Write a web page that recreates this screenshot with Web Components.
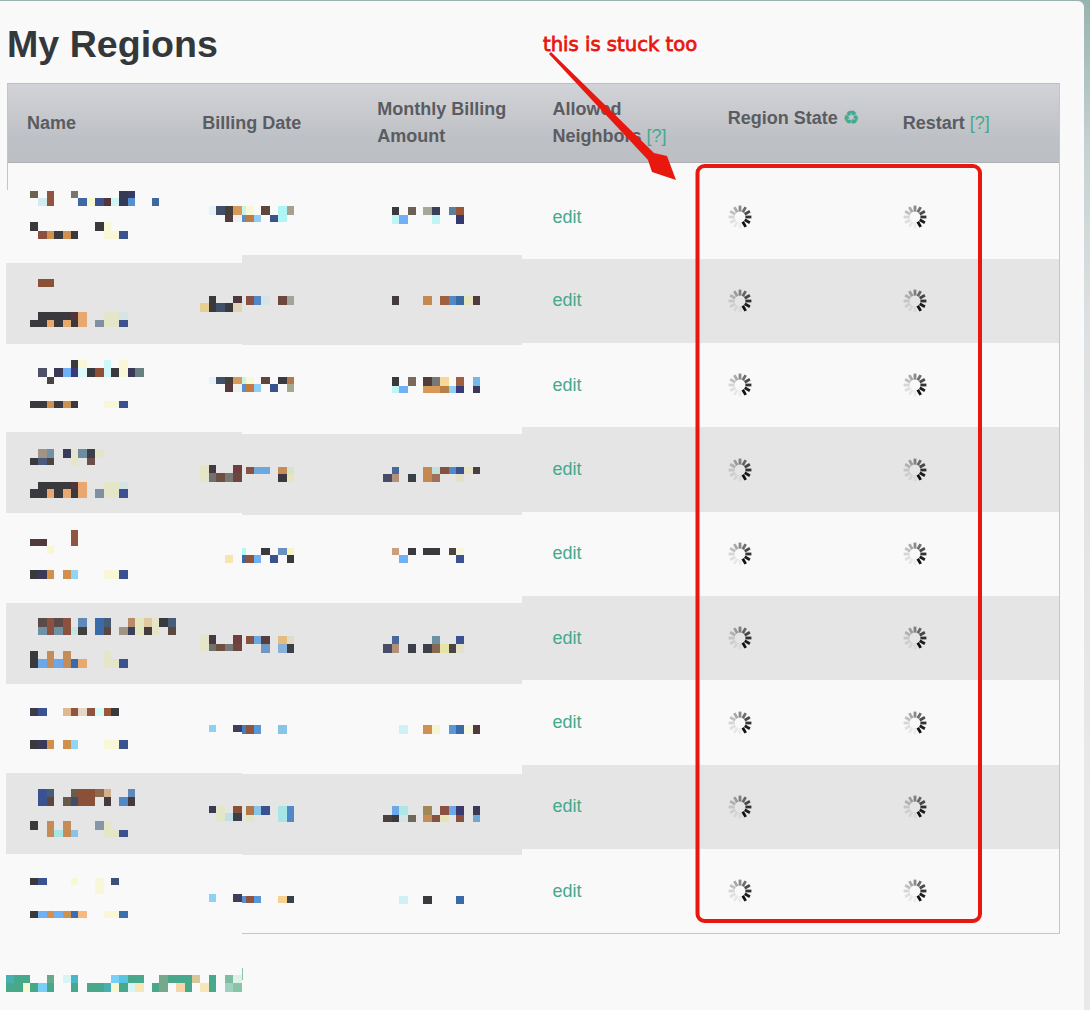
<!DOCTYPE html>
<html><head><meta charset="utf-8">
<style>
html,body{margin:0;padding:0;height:100%}
body{font-family:"Liberation Sans",Arial,sans-serif;background:linear-gradient(#98b3af,#c6d2d1 150px,#dde0e2 320px,#e9e9e9 800px);overflow:hidden}
</style></head>
<body>
<app-page>
  <page-title>My Regions</page-title>
  <regions-table>
    <table-head>
      <head-cell>Name</head-cell>
      <head-cell>Billing Date</head-cell>
      <head-cell>Monthly Billing Amount</head-cell>
      <head-cell>Allowed Neighbors <help-link></help-link></head-cell>
      <head-cell raised>Region State <recycle-mark></recycle-mark></head-cell>
      <head-cell>Restart <help-link></help-link></head-cell>
    </table-head>
    <region-row first></region-row>
    <region-row alt></region-row>
    <region-row></region-row>
    <region-row alt></region-row>
    <region-row></region-row>
    <region-row alt></region-row>
    <region-row></region-row>
    <region-row alt></region-row>
    <region-row></region-row>
  </regions-table>
  <redaction-layer></redaction-layer>
  <annotation-layer></annotation-layer>
</app-page>
<script>
function shadow(el,html){el.attachShadow({mode:'open'}).innerHTML=html;}
customElements.define('app-page',class extends HTMLElement{constructor(){super();shadow(this,`<style>
:host{display:block;position:relative;box-sizing:border-box;width:1084px;height:1009px;margin-top:1px;background:#f9f9f9;border-top-right-radius:6px;padding:22px 0 0 7px;color:#333}
</style><slot></slot>`);}});
customElements.define('page-title',class extends HTMLElement{constructor(){super();shadow(this,`<style>
:host{display:block;font:bold 37.6px/42px "Liberation Sans",Arial,sans-serif;color:#35383b;margin-bottom:18px}
</style><slot></slot>`);}});
customElements.define('regions-table',class extends HTMLElement{constructor(){super();shadow(this,`<style>
:host{display:block;box-sizing:border-box;width:1053px;border:1px solid #c6c6c6;border-top-color:#bcbec2}
</style><slot></slot>`);}});
customElements.define('table-head',class extends HTMLElement{constructor(){super();shadow(this,`<style>
:host{display:grid;box-sizing:border-box;grid-template-columns:repeat(6,1fr);height:79px;align-items:center;background:linear-gradient(#d2d3d8,#c9cace 35%,#bdc0c5 70%,#bcbfc4);border-bottom:1px solid #aeb0b5}
</style><slot></slot>`);}});
customElements.define('head-cell',class extends HTMLElement{constructor(){super();shadow(this,`<style>
:host{display:block;padding:0 19px;font:bold 18px/27px "Liberation Sans",Arial,sans-serif;color:#5a5c62}
:host([raised]){padding-bottom:10px}
</style><slot></slot>`);}});
customElements.define('help-link',class extends HTMLElement{constructor(){super();shadow(this,`<style>
:host{display:inline;font-weight:normal;color:#45a98d}
</style>[?]`);}});
customElements.define('recycle-mark',class extends HTMLElement{constructor(){super();shadow(this,`<style>
:host{display:inline;font:normal 18px/20px "DejaVu Sans",sans-serif;color:#45a98d;-webkit-text-stroke:.5px #45a98d}
</style>♻`);}});
customElements.define('load-spinner',class extends HTMLElement{constructor(){super();
 const o=[1,.95,.85,.75,.6,.48,.34,.24,.15,.1,.07,.05];
 let t='';
 // darkest spoke at five o'clock, fading counter-clockwise
 o.forEach((op,i)=>{t+=`<line x1="12" y1="6.6" x2="12" y2="0.6" transform="rotate(${150-i*30} 12 12)" stroke="#111" stroke-width="2.8" opacity="${op}"/>`;});
 shadow(this,`<style>:host{display:inline-block;width:24px;height:24px;line-height:0}svg{display:block;filter:blur(.25px)}</style><svg width="24" height="24" viewBox="0 0 24 24">${t}</svg>`);}});
customElements.define('region-row',class extends HTMLElement{constructor(){super();shadow(this,`<style>
:host{display:grid;box-sizing:border-box;grid-template-columns:repeat(6,1fr);height:84.33px;align-items:center;background:#f9f9f9;font:18px/27px "Liberation Sans",Arial,sans-serif}
:host([alt]){background:#e5e5e5}
:host([first]){height:95.84px;padding-top:13px}
.c{padding-left:19px;display:block}
a{color:#45a98d;text-decoration:none}
load-spinner{display:block}
</style>
<div class="c"></div><div class="c"></div><div class="c"></div>
<div class="c"><a>edit</a></div>
<div class="c"><load-spinner></load-spinner></div>
<div class="c"><load-spinner></load-spinner></div>`);}});
const D='#3a3a3e',B='#3a5290',O='#d09050',Y='#f8f8d8',E='#e5e5c8',R='#8f5540',L='#70b0f5',T='#48a88c';
const M=[
// row 1
[30,38,191,198,'#6b6252'],[47,54,191,206,R],[71,78,191,198,'#77766b'],[119,128,191,198,'#363a52'],[128,135,191,198,'#383b60'],
[38,47,198,206,'#d0ecf1'],[78,87,198,206,'#4068a4'],[87,95,198,206,'#f7f7d0'],[95,104,198,206,B],[104,111,198,206,'#553638'],[111,119,198,206,'#d0f5f5'],[119,128,198,206,'#363a5a'],[128,135,198,206,'#5590d0'],[152,159,198,206,'#4068a0'],
[30,38,222,231,D],[38,47,231,239,'#8c5040'],[47,54,231,239,O],[54,63,231,239,D],[63,71,231,239,O],[71,78,231,239,D],[95,104,222,231,D],[104,111,222,239,Y],[111,119,231,239,Y],[119,128,231,239,B],
[209,216,206,215,'#e5f3f8'],[216,225,206,215,'#405068'],[225,233,206,215,'#454038'],[233,242,206,215,'#d89858'],[242,246,206,215,'#c8f5e8'],[246,254,206,215,Y],[261,270,206,215,'#5e463c'],[278,287,206,222,'#b0f5f5'],[287,294,206,215,'#a89f90'],
[225,233,215,222,'#553b3b'],[233,242,215,222,'#f0f0f0'],[242,246,215,222,'#5590d0'],[246,254,215,222,'#c07c40'],[254,261,215,222,'#8ccff8'],[270,278,215,222,B],
[392,399,207,215,D],[408,416,207,215,'#6e6054'],[423,432,207,215,'#a8a898'],[432,440,207,215,'#3a4058'],[449,456,207,215,'#5c7f9c'],[456,464,207,215,'#985838'],
[392,399,215,224,'#c0f5f8'],[399,408,215,224,L],[432,440,215,224,'#c0f5f5'],[456,464,215,224,'#383870'],
// row 2
[38,54,279,287,'#8a5038'],[38,71,312,320,D],[71,78,312,320,'#553638'],[78,87,312,327,'#e8a870'],[104,119,312,327,E],[119,128,312,320,'#d5e5e5'],
[30,47,320,327,D],[47,54,320,327,'#e8a870'],[54,63,320,327,D],[63,71,320,327,'#e8a870'],[71,78,320,327,D],[95,104,320,327,'#8090a0'],[119,128,320,327,B],
[209,216,296,312,D],[233,242,296,303,'#4e383c'],[246,254,296,305,'#8a5040'],[254,261,296,305,'#5088c8'],[261,270,296,305,'#d5e5e5'],[278,287,296,305,'#6e4640'],[287,294,296,305,'#a5a298'],
[200,209,303,312,'#e5d090'],[216,225,303,312,'#405068'],[225,233,303,312,D],[233,242,303,312,'#e0d5b8'],
[392,399,296,305,'#443a40'],[423,432,296,305,'#c48850'],[440,449,296,305,'#a06040'],[449,456,296,305,'#5088c8'],[456,464,296,305,'#3a6aa0'],[464,473,296,305,'#e5e5c0'],[473,480,296,305,'#503a40'],
// row 3
[71,78,360,368,D],[78,87,360,368,Y],[104,111,360,377,'#d0f8f8'],[119,128,360,377,Y],
[38,47,368,377,'#505068'],[54,63,368,377,'#3a3a58'],[63,71,368,377,L],[71,78,368,377,'#3a3a78'],[78,87,368,377,'#e0fafa'],[87,95,368,377,D],[95,104,368,377,'#905038'],[111,119,368,377,D],[128,135,368,377,'#3a3a58'],[135,144,368,377,'#688080'],[47,54,377,384,'#4a4540'],
[30,47,401,408,D],[47,54,401,408,O],[54,63,401,408,D],[63,71,401,408,O],[71,78,401,408,D],[104,119,401,408,Y],[119,128,401,408,B],
[209,216,377,384,'#e5f3f8'],[216,225,377,384,'#405068'],[225,233,377,384,'#454038'],[233,242,377,384,'#d89858'],[242,246,377,384,'#c8f5e8'],[246,254,377,384,Y],[261,270,377,384,'#5e463c'],[278,287,377,384,D],[287,294,377,384,'#b07850'],
[225,233,384,392,'#553b3b'],[233,242,384,392,'#f0f0f0'],[242,246,384,392,'#5590d0'],[246,254,384,392,'#c07c40'],[254,261,384,392,'#8ccff8'],[270,278,384,392,B],[287,294,384,392,'#a8a890'],
[392,399,377,386,D],[408,416,377,386,'#7a6a5e'],[423,432,377,386,'#503e3e'],[432,440,377,386,'#787878'],[440,449,377,386,'#f8d898'],[456,464,377,386,'#a06040'],[473,480,377,386,'#78b8e8'],
[392,399,386,393,'#c0f5f8'],[399,408,386,393,L],[423,440,386,393,'#d89858'],[440,449,386,393,'#b88048'],[449,456,386,393,'#8cd0f5'],[456,464,386,393,'#3a3a78'],[473,480,386,393,'#3a3a58'],
// row 4
[38,47,449,458,'#a29484'],[47,54,449,458,'#7490a4'],[63,71,449,458,'#3a3a5c'],[71,78,449,465,E],[78,87,449,458,'#6c8ca0'],[87,95,449,458,'#3a3f48'],[95,104,449,458,E],
[30,38,458,465,D],[38,47,458,465,'#4a5a7c'],[47,54,458,465,'#4a4540'],[87,95,458,465,'#6a5048'],
[38,71,482,489,D],[71,78,482,489,'#553638'],[78,87,482,498,'#e8a870'],[104,119,482,498,E],[119,128,482,489,'#d5e5e5'],
[30,47,489,498,D],[47,54,489,498,'#e8a870'],[54,63,489,498,D],[63,71,489,498,'#e8a870'],[71,78,489,498,D],[95,104,489,498,'#8090a0'],[119,128,489,498,B],
[200,209,465,482,E],[209,216,465,473,'#443a40'],[233,242,465,473,'#703e40'],[246,254,467,474,'#8a5040'],[254,270,467,474,'#6ca8e0'],[278,287,467,474,'#c88c58'],[287,294,467,474,'#d5e5c8'],
[209,216,473,482,'#707070'],[216,225,473,482,'#6e5040'],[225,233,473,482,'#787878'],[233,242,473,482,'#6e4640'],[278,287,474,482,D],[287,294,474,482,'#e5e5c0'],
[392,399,467,474,'#48689c'],[423,432,467,482,'#c48850'],[432,440,467,474,'#c0e0e0'],[440,449,467,474,'#885040'],[449,456,467,474,'#5088c8'],[456,464,467,474,B],[464,473,467,474,'#e5e5c0'],[473,480,467,474,'#4a3e42'],
[383,392,474,482,'#484c64'],[392,399,474,482,'#b09078'],[408,416,474,482,'#3a3f48'],[432,440,474,482,'#a07058'],[456,464,474,482,'#e5e0c8'],
// row 5
[71,78,530,546,R],[30,47,539,546,'#503a3c'],[47,54,546,554,'#f8f8d0'],
[30,38,570,579,D],[38,47,570,579,'#3a3a58'],[47,54,570,579,O],[63,71,570,579,O],[71,78,570,579,'#90d5f8'],[104,119,570,579,Y],[119,128,570,579,B],
[225,233,555,563,'#f5e5b0'],[242,246,548,555,'#b0f8f8'],[242,246,555,563,'#3a6aa0'],[246,254,555,563,R],[254,261,555,563,L],[261,270,548,555,D],[270,278,555,563,B],[278,287,548,555,'#6890c0'],[287,294,548,555,'#f8f5c0'],[287,294,555,563,D],
[392,399,548,555,'#c8a080'],[408,416,548,555,D],[423,440,548,555,D],[449,456,548,555,'#4a4540'],[456,464,548,555,'#f8f5e0'],[399,408,555,563,L],[456,464,555,563,B],
// row 6
[38,47,618,627,'#5a4a48'],[47,54,618,635,'#8a5040'],[54,63,618,627,'#5a4a48'],[63,71,618,635,'#8a5040'],[78,87,618,627,'#6088b8'],[95,104,618,635,'#3a6aa8'],[104,111,618,627,'#485c78'],[128,135,618,627,'#b88c68'],[135,144,618,635,'#e5e5c0'],[144,152,618,627,'#e0c8a0'],[152,159,618,635,E],[159,168,618,627,D],[168,176,618,627,'#485c78'],
[38,47,627,635,'#7090a4'],[54,63,627,635,'#7090a4'],[71,78,627,635,'#c8e5e5'],[78,87,627,635,'#3f403e'],[104,111,627,635,'#5a4840'],[119,128,627,635,'#a29484'],[128,135,627,635,'#3a4058'],[144,152,627,635,'#443c3c'],[168,176,627,635,'#5a4840'],
[30,38,651,668,D],[47,54,651,668,'#c48c58'],[63,71,651,668,'#c48c58'],[104,111,651,668,E],[38,47,659,668,'#6ca8e8'],[54,63,659,668,'#6ca8e8'],[71,78,659,668,'#3a6aa8'],[78,87,659,668,'#e8a870'],[111,119,659,668,E],[119,128,659,668,B],
[200,209,635,651,E],[209,216,635,644,'#443a40'],[233,242,635,644,'#703e40'],[246,254,636,644,'#8a5040'],[254,261,636,644,'#6ca8e0'],[261,270,636,644,'#553e3e'],[278,287,636,644,'#e5bc80'],[287,294,636,644,'#e0dcc8'],
[209,216,644,651,'#707070'],[216,225,644,651,'#6e5040'],[225,233,644,651,'#787878'],[233,242,644,651,'#6e4640'],[261,270,644,653,'#7098c0'],[278,287,644,653,'#88b0d8'],[287,294,644,653,'#3a3f48'],
[392,399,636,644,'#48689c'],[432,440,636,644,'#6c90a4'],[456,464,636,644,B],
[383,392,644,653,'#484c64'],[392,399,644,653,'#b09078'],[408,416,644,653,'#3a3f48'],[423,432,644,653,'#3a3f48'],[432,440,644,653,'#886850'],[440,449,644,653,'#e5e5a8'],[449,456,644,653,'#4a4540'],[456,464,644,653,'#e5e0c8'],
// row 7
[30,38,708,716,'#3e3c4c'],[38,47,708,716,B],[63,71,708,716,'#e0b890'],[71,78,708,716,R],[78,87,708,716,'#e5d8c8'],[87,95,708,716,R],[95,104,708,716,'#d5f8f8'],[104,111,708,716,'#985838'],[111,119,708,716,D],
[30,38,740,749,D],[38,47,740,749,'#3a3a58'],[47,54,740,749,O],[63,71,740,749,O],[71,78,740,749,'#90d5f8'],[104,119,740,749,Y],[119,128,740,749,B],
[209,216,725,732,'#90d0f5'],[233,242,725,732,'#403e58'],[242,246,725,734,'#4080c0'],[246,254,725,734,R],[254,261,725,734,'#5898d8'],[278,287,725,734,'#88c4e8'],
[399,408,725,734,'#d0f0f5'],[423,432,725,734,O],[432,440,725,734,'#f5f5d0'],[449,456,725,734,'#5898d8'],[456,464,725,734,'#3a6aa8'],[464,473,725,734,'#f8f8e0'],[473,480,725,734,'#503a40'],
// row 8
[38,47,789,806,B],[47,54,789,797,'#485c78'],[71,78,789,797,'#6e5a48'],[78,95,789,806,'#8a5038'],[95,104,789,797,'#906850'],[104,111,789,797,'#d0b090'],[128,135,789,797,'#6088b8'],
[47,54,797,806,'#5a4840'],[63,71,797,806,'#685a48'],[71,78,797,806,'#3f4e6c'],[104,111,797,806,'#443a3c'],[119,128,797,806,'#5088c8'],[128,135,797,806,'#443a3c'],
[30,38,821,830,D],[47,54,821,837,'#c48c58'],[63,71,821,837,'#c48c58'],[95,104,821,830,'#8496a8'],[104,111,821,837,E],[54,63,830,837,'#a8e5e5'],[71,78,830,837,'#88c4e8'],[111,119,830,837,E],[119,128,830,837,B],
[209,216,806,813,'#3a3a58'],[216,225,806,821,E],[233,242,806,813,'#885038'],[246,254,806,815,'#b07848'],[254,261,806,815,'#88c4e8'],[261,270,806,815,B],[278,287,806,822,'#a8e5e5'],[287,294,806,822,'#5088c8'],
[225,233,813,821,'#c0e0e5'],[233,242,813,821,'#3a3f48'],[246,254,815,822,E],
[392,399,806,815,'#6ca8e8'],[399,408,806,815,'#b0e5e5'],[423,432,806,815,'#a08858'],[440,449,806,815,'#8a5040'],[449,456,806,815,'#6ca8e8'],[456,464,806,815,'#3a3a70'],[473,480,806,815,'#3a3a58'],
[383,392,815,822,'#4a4240'],[392,399,815,822,D],[399,408,815,822,'#d5e5e5'],[408,416,815,822,'#706858'],[423,432,815,822,'#c48c58'],[432,440,815,822,'#885040'],[440,449,815,822,'#e5e5b8'],[456,464,815,822,'#8a5040'],[473,480,815,822,'#6ca8d8'],
// row 9
[30,38,878,885,D],[38,47,878,885,B],[71,78,878,885,Y],[95,104,878,894,Y],[111,119,878,885,'#3e5078'],
[30,38,911,918,D],[38,47,911,918,L],[47,54,911,918,O],[54,63,911,918,L],[63,71,911,918,O],[71,78,911,918,'#3a70b0'],[78,87,911,918,'#fab880'],[104,119,911,918,Y],[119,128,911,918,'#3a70b0'],
[209,216,894,902,'#90d0f5'],[233,242,894,902,'#403e58'],[242,246,896,903,'#5090d8'],[246,254,896,903,R],[254,261,896,903,'#5898d8'],[278,287,896,903,'#f8d090'],[287,294,896,903,'#3a3f48'],
[399,408,896,904,'#d0f0f5'],[423,432,896,904,D],[456,464,896,904,'#3a6aa8'],
// link below the table
[6,14,975,983,'#48b0b0'],[14,30,975,983,T],[47,54,975,983,'#68a890'],[63,71,975,983,'#d8f5f5'],[71,78,975,983,'#48b8c8'],[111,119,975,983,'#78d0f8'],[119,128,975,983,'#58c4e0'],[128,144,975,983,T],[159,168,975,992,'#78a88c'],[168,192,975,983,T],[192,200,975,983,'#d8c898'],[209,216,975,992,T],[225,233,975,983,'#7cbca0'],[233,242,975,983,'#e0f0e8'],
[6,23,983,992,T],[23,30,983,992,'#f8f8d0'],[30,38,983,992,T],[38,47,983,992,'#78d0f8'],[47,54,983,992,T],[71,78,983,992,T],[87,104,983,992,T],[104,111,983,992,'#48b0b0'],[111,119,983,992,'#f8f8d0'],[119,128,983,992,T],[128,135,983,992,'#d8f5f5'],[135,144,983,992,'#f8e5b8'],[152,159,983,992,T],[176,185,983,992,'#f8d5a8'],[185,192,983,992,T],[200,209,983,992,'#f8e5b8'],[225,233,983,992,'#a0d0c0'],[233,242,983,992,'#88c4a8'],[242,243,968,980,'#88c4a8']
];
customElements.define('redaction-layer',class extends HTMLElement{constructor(){super();
 const r=(x1,x2,y1,y2,c)=>`<rect x="${x1}" y="${y1}" width="${x2-x1}" height="${y2-y1}" fill="${c}"/>`;
 let s=r(6,242,190,972,'#f9f9f9')+r(242,522,190,932,'#f9f9f9');
 [[263,344],[432,513],[603,684],[773,854]].forEach(b=>s+=r(6,242,b[0],b[1],'#e5e5e5'));
 [[255,345],[434,515],[603,684],[774,855]].forEach(b=>s+=r(242,522,b[0],b[1],'#e5e5e5'));
 M.forEach(m=>s+=r(...m));
 shadow(this,`<style>:host{position:absolute;left:0;top:-1px;width:1084px;height:1010px;pointer-events:none}svg{display:block}</style><svg width="1084" height="1010" viewBox="0 0 1084 1010" shape-rendering="crispEdges">${s}</svg>`);}});
customElements.define('annotation-layer',class extends HTMLElement{constructor(){super();
 shadow(this,`<style>:host{position:absolute;left:0;top:-1px;width:1084px;height:1010px;pointer-events:none}svg{display:block}
 .t{position:absolute;left:543px;top:33px;font:19.6px/24px "DejaVu Sans",sans-serif;-webkit-text-stroke:.8px #e8180f;color:#e8180f;white-space:nowrap;text-shadow:0 0 2px #fff,0 0 2px #fff}</style>
 <svg width="1084" height="1010" viewBox="0 0 1084 1010">
 <rect x="697.5" y="166" width="282.5" height="755" rx="7" fill="none" stroke="#e8180f" stroke-width="4"/>
 <polygon points="549,54 551,52 654,153 667,156 676,180 652,172 648,160" fill="#e8180f"/>
 </svg><div class="t">this is stuck too</div>`);}});
</script>
</body></html>
